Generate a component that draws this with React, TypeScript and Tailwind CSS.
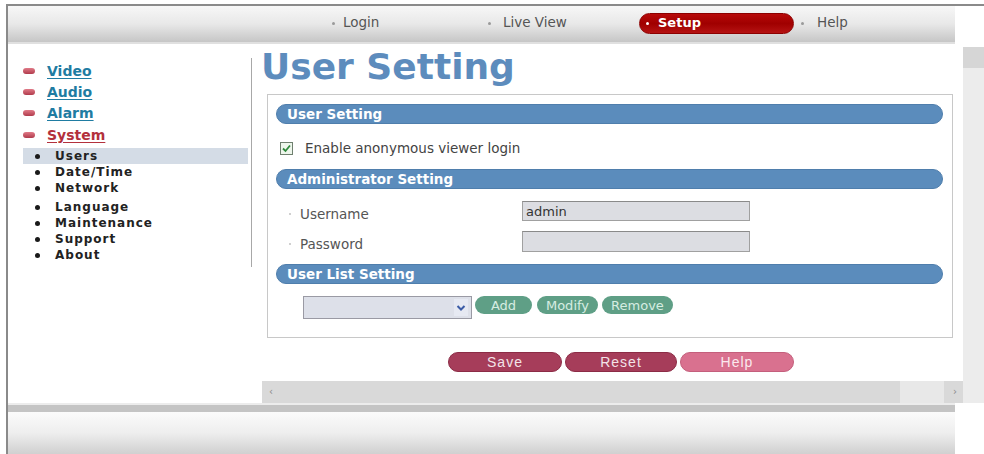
import React from "react";

function Bar({ title }: { title: string }) {
  return (
    <div className="h-[20px] rounded-full bg-[#5b8cbc] border border-[#4f7eac] flex items-center pl-[10px]">
      <span className="text-white font-bold text-[13.5px] leading-[18px] pb-[1px]">{title}</span>
    </div>
  );
}

export default function App() {
  const mainLinks = [
    { label: "Video", cls: "text-[#1f7ca2] decoration-[#1f7ca2]" },
    { label: "Audio", cls: "text-[#1f7ca2] decoration-[#1f7ca2]" },
    { label: "Alarm", cls: "text-[#1f7ca2] decoration-[#1f7ca2]" },
    { label: "System", cls: "text-[#b3303c] decoration-[#b3303c]" },
  ];
  const subItems = ["Users", "Date/Time", "Network", "Language", "Maintenance", "Support", "About"];

  return (
    <div className="w-[984px] h-[454px] bg-white overflow-hidden flex flex-col font-['DejaVu_Sans',sans-serif]">
      <div className="h-[4px] shrink-0" />
      <div className="flex-1 min-h-0 flex flex-col ml-[6px] border-t-2 border-l-2 border-[#8a8a8a]">
        {/* top nav */}
        <div className="h-[36px] shrink-0 flex">
          <div className="w-[947px] h-full bg-gradient-to-b from-[#f7f7f7] via-[#e8e8e8] to-[#c6c6c6] flex items-center pl-[324px] pb-[1px]">
            <div className="w-[156px] flex items-center">
              <span className="w-[3px] h-[3px] rounded-full bg-[#9a9a9a]" />
              <span className="ml-[8px] text-[13.5px] text-[#555] leading-none pb-[2px]">Login</span>
            </div>
            <div className="w-[151px] flex items-center">
              <span className="w-[3px] h-[3px] rounded-full bg-[#9a9a9a]" />
              <span className="ml-[12px] text-[13.5px] text-[#555] leading-none pb-[2px]">Live View</span>
            </div>
            <div className="w-[155px] h-[21px] rounded-full bg-gradient-to-b from-[#b80a0a] via-[#a00000] to-[#b51212] border border-[#8c0000] flex items-center pl-[6px]">
              <span className="w-[3px] h-[3px] rounded-full bg-white" />
              <span className="ml-[9px] text-[13px] font-bold text-white leading-none pb-[2px]">Setup</span>
            </div>
            <div className="ml-[7px] flex items-center">
              <span className="w-[3px] h-[3px] rounded-full bg-[#9a9a9a]" />
              <span className="ml-[13px] text-[13.5px] text-[#555] leading-none pb-[2px]">Help</span>
            </div>
          </div>
        </div>
        <div className="h-[5px] shrink-0">
          <div className="w-[947px] h-[2px] bg-[#e0e0e0]" />
        </div>

        {/* middle */}
        <div className="h-[356px] shrink-0 flex">
          <div className="w-[955px] flex flex-col">
            <div className="h-[334px] flex">
              {/* sidebar */}
              <div className="w-[245px] shrink-0">
                <div className="mt-[11px] w-[244px] h-[209px] border-r border-[#a8a8a8] pt-[2px]">
                  {mainLinks.map((l) => (
                    <div key={l.label} className="h-[21.3px] flex items-center pl-[15px]">
                      <span className="w-[12px] h-[6px] rounded-full bg-gradient-to-b from-[#e07a88] to-[#b03a4c]" />
                      <span className={`ml-[12px] text-[14px] font-bold underline underline-offset-2 leading-none ${l.cls}`}>{l.label}</span>
                    </div>
                  ))}
                  <div className="mt-[3px]">
                    {subItems.map((s, i) => (
                      <div
                        key={s}
                        className={`h-[16px] flex items-center ${i === 0 ? "ml-[15px] mr-[3px] bg-[#d4dce6] pl-[12px]" : "pl-[27px]"} ${i === 3 ? "mt-[3px]" : ""}`}
                      >
                        <span className="w-[5px] h-[5px] rounded-full bg-[#1a1a1a]" />
                        <span className="ml-[15px] text-[12px] font-bold tracking-[1px] text-[#222] leading-none">{s}</span>
                      </div>
                    ))}
                  </div>
                </div>
              </div>

              {/* main */}
              <div className="flex-1 flex flex-col">
                <div className="ml-[8px] text-[36px] leading-[40px] font-bold text-[#5d8cbd]">User Setting</div>
                <div className="ml-[14px] mt-[7px] w-[686px] border border-[#c8c8c8] pl-[8px] pr-[9px] pt-[9px] pb-[18px]">
                  <Bar title="User Setting" />
                  <div className="h-[45px] pt-[4px] flex items-center">
                    <div className="ml-[4px] w-[13px] h-[13px] border border-[#6f806f] bg-[#eef6ec] flex items-center justify-center">
                      <svg width="11" height="11" viewBox="0 0 11 11">
                        <path d="M2 5.5 L4.5 8 L9 2.5" stroke="#2f8a3c" strokeWidth="1.8" fill="none" />
                      </svg>
                    </div>
                    <span className="ml-[12px] text-[13.5px] text-[#444] leading-none">Enable anonymous viewer login</span>
                  </div>
                  <Bar title="Administrator Setting" />
                  <div className="pt-[12px] flex items-start">
                    <div className="w-[246px] pl-[13px] pt-[5px] h-[20px] flex items-center">
                      <span className="w-[2px] h-[2px] rounded-full bg-[#c0c0c0]" />
                      <span className="ml-[9px] text-[13.5px] text-[#555] leading-[20px]">Username</span>
                    </div>
                    <div className="w-[228px] h-[20px] bg-[#dcdde2] border border-[#a0a0a0] border-t-[#8a8a8a] pl-[3px] flex items-center text-[13px] text-[#333] leading-none">admin</div>
                  </div>
                  <div className="pt-[10px] flex items-start">
                    <div className="w-[246px] pl-[13px] pt-[5px] h-[20px] flex items-center">
                      <span className="w-[2px] h-[2px] rounded-full bg-[#c0c0c0]" />
                      <span className="ml-[9px] text-[13.5px] text-[#555] leading-[20px]">Password</span>
                    </div>
                    <div className="w-[228px] h-[21px] bg-[#dcdde2] border border-[#a0a0a0] border-t-[#8a8a8a]" />
                  </div>
                  <div className="h-[12px]" />
                  <Bar title="User List Setting" />
                  <div className="pt-[12px] flex items-start">
                    <div className="ml-[27px] w-[169px] h-[23px] bg-[#dde0e9] border border-[#9a9aa4] flex justify-end items-center pr-[3px]">
                      <div className="w-[14px] h-[17px] bg-[#e6e9f2] flex items-center justify-center">
                        <svg width="10" height="8" viewBox="0 0 10 8">
                          <path d="M1.5 2 L5 5.5 L8.5 2" stroke="#3b5ca6" strokeWidth="2" fill="none" />
                        </svg>
                      </div>
                    </div>
                    <div className="ml-[3px] w-[57px] h-[18px] rounded-full bg-[#5f9f86] flex items-center justify-center text-[13px] text-[#d6ede2] leading-none">Add</div>
                    <div className="ml-[5px] w-[61px] h-[18px] rounded-full bg-[#5f9f86] flex items-center justify-center text-[13px] text-[#d6ede2] leading-none">Modify</div>
                    <div className="ml-[4px] w-[71px] h-[18px] rounded-full bg-[#5f9f86] flex items-center justify-center text-[13px] text-[#d6ede2] leading-none">Remove</div>
                  </div>
                </div>
                <div className="mt-[14px] ml-[195px] flex">
                  <div className="w-[114px] h-[20px] rounded-full bg-[#a63d5a] border border-[#8c2c46] flex items-center justify-center font-['Liberation_Sans',sans-serif] text-[14px] tracking-[1px] text-[#f3e3e8] leading-none">Save</div>
                  <div className="ml-[3px] w-[112px] h-[20px] rounded-full bg-[#a63d5a] border border-[#8c2c46] flex items-center justify-center font-['Liberation_Sans',sans-serif] text-[14px] tracking-[1px] text-[#f3e3e8] leading-none">Reset</div>
                  <div className="ml-[3px] w-[114px] h-[20px] rounded-full bg-[#d9718f] border border-[#c45f7c] flex items-center justify-center font-['Liberation_Sans',sans-serif] text-[14px] tracking-[1px] text-[#fbe9ee] leading-none">Help</div>
                </div>
              </div>
            </div>
            {/* horizontal scrollbar */}
            <div className="h-[22px] flex">
              <div className="w-[254px]" />
              <div className="flex-1 bg-[#d9d9d9] flex items-center">
                <span className="ml-[7px] text-[10px] text-[#8a8a8a] leading-none">‹</span>
                <div className="flex-1" />
                <div className="w-[44px] h-full bg-[#e8e8e8]" />
                <span className="ml-[9px] mr-[6px] text-[10px] text-[#8a8a8a] leading-none">›</span>
              </div>
            </div>
          </div>
          {/* vertical scrollbar */}
          <div className="flex-1 bg-[#ececec] flex flex-col">
            <div className="h-[21px] bg-[#d6d6d6]" />
          </div>
        </div>

        {/* bottom */}
        <div className="flex-1 flex flex-col">
          <div className="w-[947px] h-[2px] bg-[#ececec]" />
          <div className="w-[947px] h-[7px] bg-[#c4c4c4]" />
          <div className="w-[947px] flex-1 bg-gradient-to-b from-[#fbfbfb] via-[#eeeeee] to-[#d0d0d0]" />
        </div>
      </div>
    </div>
  );
}
